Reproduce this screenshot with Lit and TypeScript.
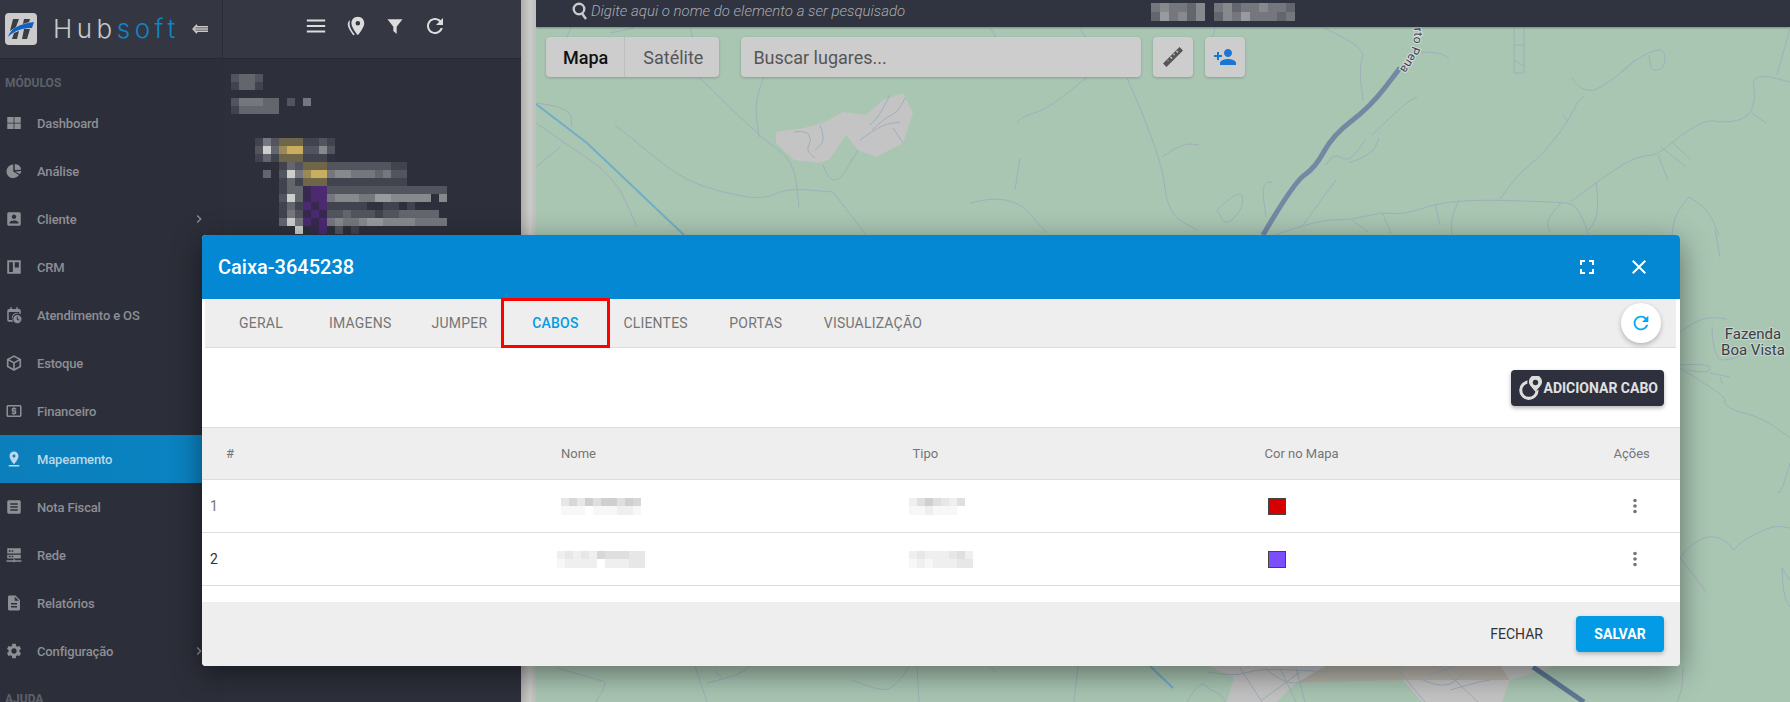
import { LitElement, html, css, svg, nothing } from 'lit';
import { customElement } from 'lit/decorators.js';

const ICONS: Record<string, string> = {
  accountBox: 'M19 3H5c-1.11 0-2 .9-2 2v14c0 1.1.89 2 2 2h14c1.1 0 2-.9 2-2V5c0-1.1-.9-2-2-2zm-7 3c1.65 0 3 1.35 3 3s-1.35 3-3 3-3-1.35-3-3 1.35-3 3-3zm6 12H6v-1c0-2 4-3.1 6-3.1s6 1.1 6 3.1v1z',
  atm: 'M11 17h2v-1h1c.55 0 1-.45 1-1v-3c0-.55-.45-1-1-1h-3v-1h4V8h-2V7h-2v1h-1c-.55 0-1 .45-1 1v3c0 .55.45 1 1 1h3v1H9v2h2v1zm9-13H4c-1.11 0-1.99.89-1.99 2L2 18c0 1.11.89 2 2 2h16c1.11 0 2-.89 2-2V6c0-1.11-.89-2-2-2zm0 14H4V6h16v12z',
  pinDrop: 'M18 8c0-3.31-2.69-6-6-6S6 4.69 6 8c0 4.5 6 11 6 11s6-6.5 6-11zm-8 0c0-1.1.9-2 2-2s2 .9 2 2-.89 2-2 2c-1.1 0-2-.9-2-2zM5 20v2h14v-2H5z',
  list: 'M19 3H5c-1.1 0-2 .9-2 2v14c0 1.1.9 2 2 2h14c1.1 0 2-.9 2-2V5c0-1.1-.9-2-2-2zm-2 14H7v-2h10v2zm0-4H7v-2h10v2zm0-4H7V7h10v2z',
  description: 'M14 2H6c-1.1 0-1.99.9-1.99 2L4 20c0 1.1.89 2 1.99 2H18c1.1 0 2-.9 2-2V8l-6-6zm2 16H8v-2h8v2zm0-4H8v-2h8v2zm-3-5V3.5L18.5 9H13z',
  settings: 'M19.14 12.94c.04-.3.06-.61.06-.94 0-.32-.02-.64-.07-.94l2.03-1.58c.18-.14.23-.41.12-.61l-1.92-3.32c-.12-.22-.37-.29-.59-.22l-2.39.96c-.5-.38-1.03-.7-1.62-.94l-.36-2.54c-.04-.24-.24-.41-.48-.41h-3.84c-.24 0-.43.17-.47.41l-.36 2.54c-.59.24-1.13.57-1.62.94l-2.39-.96c-.22-.08-.47 0-.59.22L2.74 8.87c-.12.21-.08.47.12.61l2.03 1.58c-.05.3-.09.63-.09.94s.02.64.07.94l-2.03 1.58c-.18.14-.23.41-.12.61l1.92 3.32c.12.22.37.29.59.22l2.39-.96c.5.38 1.03.7 1.62.94l.36 2.54c.05.24.24.41.48.41h3.84c.24 0 .44-.17.47-.41l.36-2.54c.59-.24 1.13-.56 1.62-.94l2.39.96c.22.08.47 0 .59-.22l1.92-3.32c.12-.22.07-.47-.12-.61l-2.01-1.58zM12 15.6c-1.98 0-3.6-1.62-3.6-3.6s1.62-3.6 3.6-3.6 3.6 1.62 3.6 3.6-1.62 3.6-3.6 3.6z',
  refresh: 'M17.65 6.35C16.2 4.9 14.21 4 12 4c-4.42 0-7.99 3.58-7.99 8s3.57 8 7.99 8c3.73 0 6.84-2.55 7.73-6h-2.08c-.82 2.33-3.04 4-5.65 4-3.31 0-6-2.69-6-6s2.69-6 6-6c1.66 0 3.14.69 4.22 1.78L13 11h7V4l-2.35 2.35z',
  personAdd: 'M15 12c2.21 0 4-1.79 4-4s-1.79-4-4-4-4 1.79-4 4 1.79 4 4 4zm-9-2V7H4v3H1v2h3v3h2v-3h3v-2H6zm9 4c-2.67 0-8 1.34-8 4v2h16v-2c0-2.66-5.33-4-8-4z',
  fullscreen: 'M7 14H5v5h5v-2H7v-3zm-2-4h2V7h3V5H5v5zm12 7h-3v2h5v-5h-2v3zM14 5v2h3v3h2V5h-5z',
  close: 'M19 6.41L17.59 5 12 10.59 6.41 5 5 6.41 10.59 12 5 17.59 6.41 19 12 13.41 17.59 19 19 17.59 13.41 12z',
  chevron: 'M10 6L8.59 7.41 13.17 12l-4.58 4.59L10 18l6-6z',
  grid: 'M3 4h8.5v7.5H3zM12.5 4H21v7.5h-8.5zM3 12.5h8.5V20H3zM12.5 12.5H21V20h-8.5z',
  pie: 'M11 3.5a9 9 0 1 0 7.6 13.8L11 12.6zM13 2.5v8.3l8.6-.6A9 9 0 0 0 13 2.5zM13.4 12.5l6.4 3.7a9 9 0 0 0 2-4.2z',
  board: 'M3 3h18v18H3zM5.5 5.5v13h5v-13zM13 5.5v7h5.5v-7z',
  calendar: 'M7 1.5h2V4h6V1.5h2V4h1.5A2.5 2.5 0 0 1 21 6.5V11a7 7 0 0 0-9.9 10H5.5A2.5 2.5 0 0 1 3 18.5v-12A2.5 2.5 0 0 1 5.5 4H7zM5 8v10.5h5A7 7 0 0 1 16 10h3V8zM16.5 12a5.5 5.5 0 1 1 0 11 5.5 5.5 0 0 1 0-11zm-.8 2v4l3.2 1.6.6-1.2-2.4-1.2V14z',
  cube: 'M12 1.5l9.5 5.2v10.6L12 22.5l-9.5-5.2V6.7zM6 7.2l6 3.3 6-3.3-6-3.2zM4.7 9v7l6.2 3.4v-7zM13.1 12.4v7l6.2-3.4V9z',
  server: 'M3 3h18v7H3zM5 5.5v2h2.5v-2zM9 5.5v2h2v-2zM3 11.5h18v5H3zM5 13v2h2.5v-2zM9 13v2h2v-2zM11 17.5h2V19h9v2h-9v.5h-2V21H2v-2h9z',
  funnel: 'M3 4h18l-7 9v8.5L10 18v-5z',
  place: 'M14 2c-3.9 0-7 3.1-7 7 0 5.2 7 13 7 13s7-7.8 7-13c0-3.900-3.100-7-7-7zm0 9.500a2.500 2.500 0 1 1 0-5 2.500 2.500 0 0 1 0 5zM5.500 5.500C3.900 6.800 3 8.300 3 10c0 4.500 6 12 6 12l1.700-.600C8.500 18.500 5 13.500 5 10c0-1.700.300-3.200.500-4.500z',
  menu: 'M2 5h20v2.200H2zM2 10.900h20v2.200H2zM2 16.800h20V19H2z',
  vert: 'M12 8a2 2 0 1 0 0-4 2 2 0 0 0 0 4zm0 2a2 2 0 1 0 0 4 2 2 0 0 0 0-4zm0 6a2 2 0 1 0 0 4 2 2 0 0 0 0-4z',
};

const icon = (name: string, size: number, cls = '') => html`<svg class=${cls} width=${size} height=${size} viewBox="0 0 24 24" fill="currentColor" fill-rule="evenodd"><path d=${ICONS[name]}></path></svg>`;

// blurred-out data in the screenshot, drawn as mosaic cells; each char is one cell
const darkCell = (c: string) => {
  const special: Record<string, string> = { y: '#6f6548', Y: '#9a8a58', Z: '#c9ae60', p: '#38294f', P: '#4b2a72' };
  if (special[c]) return special[c];
  if (c === ' ') return 'transparent';
  const t = Number(c) / 9;
  const mix = (a: number, b: number) => Math.round(a + (b - a) * t);
  return `rgb(${mix(48, 205)},${mix(51, 205)},${mix(62, 205)})`;
};
const lightCell = (c: string) => {
  if (c === ' ') return 'transparent';
  const v = 255 - Number(c) * 8;
  return `rgb(${v},${v},${v})`;
};

const mosaic = (rows: string[], cell: (c: string) => string, w = 8, h = 8) => html`
  <div class="mosaic">
    ${rows.map(
      (r) => html`<div class="mosaic-row" style="height:${h}px">${[...r].map((c) => html`<i style="width:${w}px;background:${cell(c)}"></i>`)}</div>`,
    )}
  </div>
`;

const mosaicStyles = css`
  .mosaic { display: flex; flex-direction: column; }
  .mosaic-row { display: flex; }
  .mosaic-row i { display: block; flex: none; }
`;

type NavItem = { label: string; icon: string; arrow?: boolean; active?: boolean };

const NAV: NavItem[] = [
  { label: 'Dashboard', icon: 'grid' },
  { label: 'Análise', icon: 'pie' },
  { label: 'Cliente', icon: 'accountBox', arrow: true },
  { label: 'CRM', icon: 'board' },
  { label: 'Atendimento e OS', icon: 'calendar' },
  { label: 'Estoque', icon: 'cube' },
  { label: 'Financeiro', icon: 'atm' },
  { label: 'Mapeamento', icon: 'pinDrop', active: true },
  { label: 'Nota Fiscal', icon: 'list' },
  { label: 'Rede', icon: 'server' },
  { label: 'Relatórios', icon: 'description' },
  { label: 'Configuração', icon: 'settings', arrow: true },
];

@customElement('hub-sidebar')
export class HubSidebar extends LitElement {
  static styles = css`
    :host { display: flex; flex-direction: column; flex: none; width: 222px; height: 702px; background: #2c2e39; font-family: Roboto, sans-serif; overflow: hidden; }
    .brand { display: flex; align-items: center; flex: none; height: 59px; box-sizing: border-box; padding-left: 5px; background: #343742; border-bottom: 1px solid #282a33; }
    .word { font-family: Inter, sans-serif; font-weight: 300; font-size: 26px; line-height: 1; margin-left: 16px; width: 130px; flex: none; color: #c9c9c9; letter-spacing: 4.5px; white-space: nowrap; }
    .word b { font-weight: 300; color: #0f85c5; }
    .back { margin-left: 9px; flex: none; }
    .section { flex: none; color: #5e606a; font-size: 12px; font-weight: 700; padding: 17px 0 0 5px; height: 23px; line-height: 14px; }
    nav { display: flex; flex-direction: column; flex: none; }
    .item { display: flex; align-items: center; height: 48px; flex: none; padding-left: 5px; color: #8e8f95; font-size: 13px; font-weight: 500; letter-spacing: -.15px; }
    .item .label { margin-left: 14px; flex: 1; }
    .item.active { background: linear-gradient(90deg, #0a7fbb, #0a84c4); color: #bcd8ea; }
    .arrow { margin-right: 15px; }
  `;

  render() {
    return html`
      <div class="brand">
        <svg width="32" height="32" viewBox="0 0 32 32">
          <rect width="32" height="32" rx="4" fill="#cbcbcb"></rect>
          <polygon points="8,6 14,6 11,14 5,18" fill="#3b3d43"></polygon>
          <polygon points="9,20 14,18 12,26 7,26" fill="#3b3d43"></polygon>
          <polygon points="19,6 25,6 24,9 18,11" fill="#3b3d43"></polygon>
          <polygon points="19,16 25,16 22,26 17,26" fill="#3b3d43"></polygon>
          <path d="M3 24C6 15 14 11 29 9L27 15C18 15 10 17 3 24Z" fill="#0f62c4"></path>
        </svg>
        <div class="word">Hub<b>soft</b></div>
        <svg class="back" width="16" height="10" viewBox="0 0 16 10" fill="none" stroke="#c9c9c9" stroke-width="1.6">
          <path d="M5 .8L1.2 5 5 9.200"></path>
          <path d="M3 2.800h13M2 5h14M3 7.200h13"></path>
        </svg>
      </div>
      <div class="section">MÓDULOS</div>
      <nav>
        ${NAV.map(
          (n) => html`
            <div class="item ${n.active ? 'active' : ''}">
              ${icon(n.icon, 18)}
              <span class="label">${n.label}</span>
              ${n.arrow ? icon('chevron', 16, 'arrow') : nothing}
            </div>
          `,
        )}
      </nav>
      <div class="section">AJUDA</div>
    `;
  }
}

const TREE = [
  '142yyy1121',
  '293YZZ2252',
  '131yyy1110',
  '   132yyy2222222211',
  ' 3 294YZZ4554443422',
  '   131yyy1111111111',
  '   133pPP222222222222222',
  '   293pPP4555446655555 5',
  '   131PpP111110011 1',
  '   142pPp22322212233333',
  '   394PpP454456655554444',
  '     9 pP 2 1',
];

@customElement('tree-panel')
export class TreePanel extends LitElement {
  static styles = [
    mosaicStyles,
    css`
      :host { display: flex; flex-direction: column; flex: none; width: 299px; height: 702px; background: #2d303b; border-left: 1px solid #2a2c36; box-sizing: border-box; overflow: hidden; }
      .tools { display: flex; align-items: center; gap: 18px; flex: none; height: 59px; box-sizing: border-box; padding: 0 0 7px 82px; background: #353843; border-bottom: 1px solid #282a33; color: #dcdcdc; }
      .blocks { display: flex; flex-direction: column; padding: 15px 0 0 8px; }
      .b2 { margin-top: 8px; }
      .tree { margin: 24px 0 0 24px; }
    `,
  ];

  render() {
    return html`
      <div class="tools">
        ${icon('menu', 22)} ${icon('place', 22)} ${icon('funnel', 20)} ${icon('refresh', 24)}
      </div>
      <div class="blocks">
        ${mosaic(['2332 ', '1331 '], darkCell)}
        <div class="b2">${mosaic(['244433 2 4 ', '133333  '], darkCell)}</div>
        <div class="tree">${mosaic(TREE, darkCell)}</div>
      </div>
    `;
  }
}

// minor roads, in page coordinates
const ROADS = [
  'M699 77L759 137L794 160L799 207', 'M823 165L833 192L858 150', 'M833 192L866 235',
  'M615 125L634 140L679 177L719 192L764 200L786 188L833 192', 'M764 77L754 100L759 137',
  'M1087 77L1052 107L1022 117L1017 123', 'M1127 78L1162 157L1167 213L1197 230', 'M1162 157L1182 143L1199 145',
  'M970 203L1010 192L1047 233', 'M1020 158L1015 190', 'M1217 210L1241 187L1244 207L1226 227L1217 210',
  'M536 123L565 143L615 177L637 227', 'M536 167L560 147', 'M536 103L570 107L572 127', 'M571 28L565 40', 'M610 33L634 28',
  'M690 28L696 50', 'M990 28L998 40', 'M1080 28L1090 45', 'M1215 28L1212 40',
  'M794 132L806 130L812 140L806 150L815 158', 'M820 125L826 140L815 150', 'M872 130L885 118L898 112L905 98', 'M890 95L880 115L870 125',
  'M860 140L880 125L900 122', 'M893 128L903 143',
  'M1324 28L1366 47L1359 67L1363 100', 'M1417 52L1440 52L1449 59',
  'M1514 28V73H1524V28M1514 45H1524M1514 60L1524 66',
  'M1621 72L1635 60L1654 50L1665 50L1665 68L1651 72L1649 55', 'M1572 78L1584 97L1617 77L1635 60',
  'M1584 97L1579 98L1568 122L1542 155L1519 173L1500 199', 'M1563 115L1568 122',
  'M1275 235L1317 220L1352 220L1382 212L1403 215L1451 199L1561 202L1577 205L1589 235',
  'M1570 202L1617 167L1640 156L1658 155L1672 142L1705 119L1724 123L1749 118L1756 97L1752 80L1763 75L1790 82',
  'M1752 113L1766 123', 'M1777 75L1790 28', 'M1658 155L1668 180', 'M1661 147L1686 167', 'M1672 142L1691 160',
  'M1562 202L1545 220L1550 232', 'M1459 200L1451 217L1452 235', 'M1435 204L1440 225', 'M1382 212L1391 233',
  'M1352 220L1368 232', 'M1303 225L1336 180', 'M1326 165L1333 152L1349 163L1365 140', 'M1349 163L1372 155L1379 138',
  'M1372 135L1405 103L1417 97', 'M1272 182L1261 180L1266 217', 'M1689 197L1675 213L1672 235', 'M1689 197L1707 207L1719 235',
  'M1596 182L1600 213L1589 230', 'M1715 230L1720 257', 'M1680 332L1697 320L1713 317L1727 319',
  'M1712 327L1713 360L1733 360L1750 350', 'M1680 365L1710 363L1710 373L1687 370',
  'M1680 368L1710 387L1725 397L1725 408L1763 418L1790 438', 'M1710 373L1730 377', 'M1720 377L1723 385',
  'M1790 463L1782 492L1777 492', 'M1680 558L1687 547L1710 534L1730 543L1733 552L1740 542L1773 525L1790 528',
  'M1680 558L1707 593', 'M1782 568L1783 595L1790 607', 'M1782 568L1790 580', 'M1683 667L1683 687L1677 702',
  'M557 668L600 680L607 683L596 702', 'M695 666L707 702', 'M749 666L745 673L707 683', 'M714 670L722 678',
  'M852 680L883 693L898 683L909 666', 'M917 666L919 702', 'M1078 666L1074 702', 'M990 666L996 672',
  'M1187 702L1200 680L1210 690L1222 695L1225 702', 'M1240 668L1262 702', 'M1265 668L1290 690L1320 670', 'M1262 700L1300 672',
  'M1280 668L1296 702', 'M1296 668L1305 702', 'M1208 672L1234 677L1260 668L1330 672',
  'M1395 666L1425 702', 'M1440 666L1478 702', 'M1430 675L1455 666', 'M1423 680L1445 690L1465 672',
  'M1450 690L1478 682L1490 680',
];

// rounds the corners of a plain polyline; anything else goes through as it is
const smooth = (d: string) => {
  if (!/^M[\d ]+(L[\d ]+)+$/.test(d)) return d;
  const pts = d.slice(1).split('L').map((p) => p.trim().split(' ').map(Number));
  if (pts.length < 3) return d;
  let out = `M${pts[0][0]} ${pts[0][1]}`;
  for (let i = 1; i < pts.length - 1; i++) {
    const mx = (pts[i][0] + pts[i + 1][0]) / 2;
    const my = (pts[i][1] + pts[i + 1][1]) / 2;
    out += `Q${pts[i][0]} ${pts[i][1]} ${mx} ${my}`;
  }
  const last = pts[pts.length - 1];
  return `${out}L${last[0]} ${last[1]}`;
};

const GREY_AREAS = [
  '776,132 804,128 823,123 843,112 866,115 883,100 903,93 913,113 903,143 876,157 858,150 846,135 829,160 819,163 794,160 776,143',
  '1208,666 1234,677 1227,702 1277,702 1296,683 1403,680 1422,702 1502,702 1510,680 1556,666',
];

@customElement('hub-map')
export class HubMap extends LitElement {
  static styles = [
    mosaicStyles,
    css`
      :host { display: block; position: relative; flex: 1; height: 702px; background: #a9c6b3; font-family: Roboto, sans-serif; overflow: hidden; }
      .canvas { position: absolute; inset: 0; }
      .search { position: relative; display: flex; align-items: center; height: 27px; box-sizing: border-box; padding: 0 0 6px 36px; background: #303340; box-shadow: 0 1px 2px rgba(0,0,0,.3); color: #a9abb0; }
      .search em { font-size: 15px; line-height: 18px; font-weight: 300; margin-left: 3px; width: 560px; flex: none; white-space: nowrap; }
      .who { align-self: flex-start; margin-top: 3px; }
      .controls { position: absolute; left: 10px; top: 37px; display: flex; gap: 12px; color: #565656; }
      .card { display: flex; align-items: center; height: 40px; background: #cdcdcd; border-radius: 4px; box-shadow: 0 1px 3px rgba(0,0,0,.2); font-size: 18px; }
      .tab { display: flex; align-items: center; height: 100%; padding: 0 16px 0 18px; }
      .tab.on { color: #111; font-weight: 500; border-right: 1px solid #bdbdbd; padding: 0 16px 0 17px; }
      .places { width: 400px; box-sizing: border-box; padding-left: 12px; margin-left: 10px; }
      .square { width: 40px; justify-content: center; }
      .blue { color: #1976d2; }
      svg.roads { display: block; }
    `,
  ];

  render() {
    return html`
      <svg class="canvas roads" width="1254" height="702" viewBox="536 0 1254 702" fill="none">
        ${GREY_AREAS.map((p) => svg`<polygon points=${p} fill="#c4c4c4"></polygon>`)}
        <polygon points="1326,666 1403,666 1403,680 1296,683" fill="#b5b3a8"></polygon>
        <polygon points="1403,666 1500,666 1510,680 1403,680" fill="#b9b5ae"></polygon>
        ${ROADS.map((d) => svg`<path d=${smooth(d)} stroke="#a0afba" stroke-width="1"></path>`)}
        <path d="M536 104L587 143L684 235" stroke="#72adc6" stroke-width="2"></path>
        <path d="M1150 666L1173 688" stroke="#72adc6" stroke-width="2"></path>
        <path d=${smooth('M1263 235L1294 182L1315 168L1333 135L1370 107L1400 68')} stroke="#7389a3" stroke-width="5" stroke-linejoin="round"></path>
        <path d="M1533 667L1584 702" stroke="#5f7a96" stroke-width="5"></path>
        <path id="rio" d="M1414 28Q1417 52 1392 78" fill="none"></path>
        <text font-family="Roboto, sans-serif" font-size="12" fill="#3a3f4d" stroke="#d3ddd8" stroke-width="2" paint-order="stroke">
          <textPath href="#rio">rto Pena</textPath>
        </text>
        <g font-family="Roboto, sans-serif" font-size="15" fill="#3a3d46" stroke="#c6d6cc" stroke-width="2" paint-order="stroke" text-anchor="middle">
          <text x="1753" y="339">Fazenda</text>
          <text x="1753" y="355">Boa Vista</text>
        </g>
      </svg>
      <div class="search">
        <svg width="16" height="18" viewBox="0 0 16 18" fill="none" stroke="#c9cacd" stroke-width="2.400">
          <circle cx="7" cy="7" r="5.300"></circle>
          <path d="M10 11.500L14 17"></path>
        </svg>
        <em>Digite aqui o nome do elemento a ser pesquisado</em>
        <div class="who">${mosaic(['454435 453445443', '364535 354644434'], darkCell, 9, 9)}</div>
      </div>
      <div class="controls">
        <div class="card"><span class="tab on">Mapa</span><span class="tab">Satélite</span></div>
        <div class="card places">Buscar lugares...</div>
        <div class="card square">
          <svg width="24" height="24" viewBox="0 0 24 24" fill="#555">
            <path d="M2 18.500L18.500 2l3.500 3.500L5.500 22zM6 15.500l1 1L8 15.500zM9 12.500l1.500 1.500 1-1L10 11.500zM12 9.500l1 1 1-1-1-1zM15 6.500l1.500 1.500 1-1L16 5.500z" fill-rule="evenodd"></path>
          </svg>
        </div>
        <div class="card square blue">${icon('personAdd', 24)}</div>
      </div>
    `;
  }
}

type Cable = { n: string; name: string[]; type: string[]; color: string; nameClass?: string; strong?: boolean };

const CABLES: Cable[] = [
  { n: '1', name: ['35364664650', '11101112210'], type: ['2464324', '1121110'], color: '#d60000' },
  { n: '2', name: ['23232544433', '12222022233'], type: ['23222342', '12122233'], color: '#7c4dff', nameClass: 'shift', strong: true },
];

const TABS = ['Geral', 'Imagens', 'Jumper', 'Cabos', 'Clientes', 'Portas', 'Visualização'];

@customElement('cable-dialog')
export class CableDialog extends LitElement {
  static styles = [
    mosaicStyles,
    css`
      :host { position: absolute; left: 202px; top: 235px; width: 1478px; height: 431px; display: flex; flex-direction: column; background: #fff; border-radius: 4px; box-shadow: 0 8px 30px rgba(0,0,0,.45); font-family: Roboto, sans-serif; font-size: 13px; color: #757575; overflow: visible; }
      header { display: flex; align-items: center; flex: none; height: 64px; padding: 0 29px 0 16px; background: #0488d3; border-radius: 4px 4px 0 0; color: #fff; }
      h2 { flex: 1; margin: 0; font-size: 20px; font-weight: 500; }
      header svg + svg { margin-left: 28px; }
      .tabs { display: flex; align-items: center; flex: none; height: 49px; box-sizing: border-box; margin: 0 4px 0 3px; padding-left: 8px; background: #eee; border-bottom: 1px solid #ddd; font-size: 14px; letter-spacing: .2px; }
      .tab { min-width: 96px; box-sizing: border-box; padding: 0 20px; text-align: center; text-transform: uppercase; white-space: nowrap; }
      .tab.on { color: #039be5; font-weight: 500; }
      .reload { display: flex; align-items: center; justify-content: center; width: 40px; height: 40px; margin: 0 15px 0 auto; border-radius: 50%; background: #fff; color: #03a9f4; box-shadow: 0 2px 5px rgba(0,0,0,.25); }
      .bar { display: flex; align-items: center; justify-content: flex-end; flex: none; height: 80px; padding-right: 16px; box-sizing: border-box; border-bottom: 1px solid #ddd; }
      .add { display: flex; align-items: center; gap: 1px; height: 36px; padding: 0 6px 0 7px; border-radius: 4px; background: #2e303e; color: #e0e0e0; font-weight: 700; font-size: 14px; box-shadow: 0 2px 4px rgba(0,0,0,.3); }
      .row { display: grid; grid-template-columns: 351px 351.500px 352px 351px 1fr; align-items: center; flex: none; height: 53px; box-sizing: border-box; border-bottom: 1px solid #ddd; }
      .row.head { height: 52px; background: #eee; }
      .row > div { padding-left: 8px; }
      .head .hash { padding-left: 24px; }
      .head .acts { padding-left: 6px; }
      .n { font-size: 14px; }
      .strong { color: #333; }
      .shift { margin-left: -4px; }
      .type { margin-left: -4px; }
      .swatch { width: 16px; height: 15px; margin-left: 3px; border: 1px solid #444; }
      .kebab { display: flex; margin-left: 8px; color: #757575; }
      .gap { flex: 1; }
      footer { display: flex; align-items: center; justify-content: flex-end; flex: none; height: 64px; padding-right: 16px; background: #eee; border-radius: 0 0 4px 4px; font-size: 14px; }
      .ghost { color: #333; margin-right: 33px; }
      .save { display: flex; align-items: center; justify-content: center; width: 88px; height: 36px; border-radius: 4px; background: #039be5; color: #fff; font-weight: 700; box-shadow: 0 2px 4px rgba(0,0,0,.25); }
      .mark { position: absolute; left: 299px; top: 63px; width: 109px; height: 50px; box-sizing: border-box; border: 3px solid #f00; pointer-events: none; }
    `,
  ];

  render() {
    return html`
      <header>
        <h2>Caixa-3645238</h2>
        ${icon('fullscreen', 24)} ${icon('close', 24)}
      </header>
      <div class="tabs">
        ${TABS.map((t) => html`<div class="tab ${t === 'Cabos' ? 'on' : ''}">${t}</div>`)}
        <div class="reload">${icon('refresh', 22)}</div>
      </div>
      <div class="bar">
        <div class="add">
          <svg width="24" height="24" viewBox="0 0 22 22" fill="none">
            <circle cx="10" cy="13" r="7.500" stroke="#ddd" stroke-width="2.800"></circle>
            <circle cx="16" cy="6" r="7.500" fill="#2e303e"></circle>
            <path d="M16 14.500L11 8.500A6 6 0 1 1 21 8.500z" fill="#ddd"></path>
            <circle cx="16" cy="6" r="2.500" fill="#2e303e"></circle>
          </svg>
          ADICIONAR CABO
        </div>
      </div>
      <div class="row head">
        <div class="hash">#</div><div>Nome</div><div>Tipo</div><div>Cor no Mapa</div><div class="acts">Ações</div>
      </div>
      ${CABLES.map(
        (c) => html`
          <div class="row">
            <div class="n ${c.strong ? 'strong' : ''}">${c.n}</div>
            <div class=${c.nameClass ?? ''}>${mosaic(c.name, lightCell, 8, 8.500)}</div>
            <div class="type">${mosaic(c.type, lightCell, 8, 8.500)}</div>
            <div><div class="swatch" style="background:${c.color}"></div></div>
            <div><span class="kebab">${icon('vert', 22)}</span></div>
          </div>
        `,
      )}
      <div class="gap"></div>
      <footer>
        <span class="ghost">FECHAR</span>
        <span class="save">SALVAR</span>
      </footer>
      <div class="mark"></div>
    `;
  }
}

@customElement('app-root')
export class AppRoot extends LitElement {
  static styles = css`
    :host { display: flex; position: relative; width: 100%; height: 100vh; overflow: hidden; background: #2d303b; }
    .gutter { flex: none; width: 15px; height: 702px; background: linear-gradient(90deg, #aeaeae, #cbcbc9 60%, #bdbdbb); }
  `;

  render() {
    return html`
      <hub-sidebar></hub-sidebar>
      <tree-panel></tree-panel>
      <div class="gutter"></div>
      <hub-map></hub-map>
      <cable-dialog></cable-dialog>
    `;
  }
}
